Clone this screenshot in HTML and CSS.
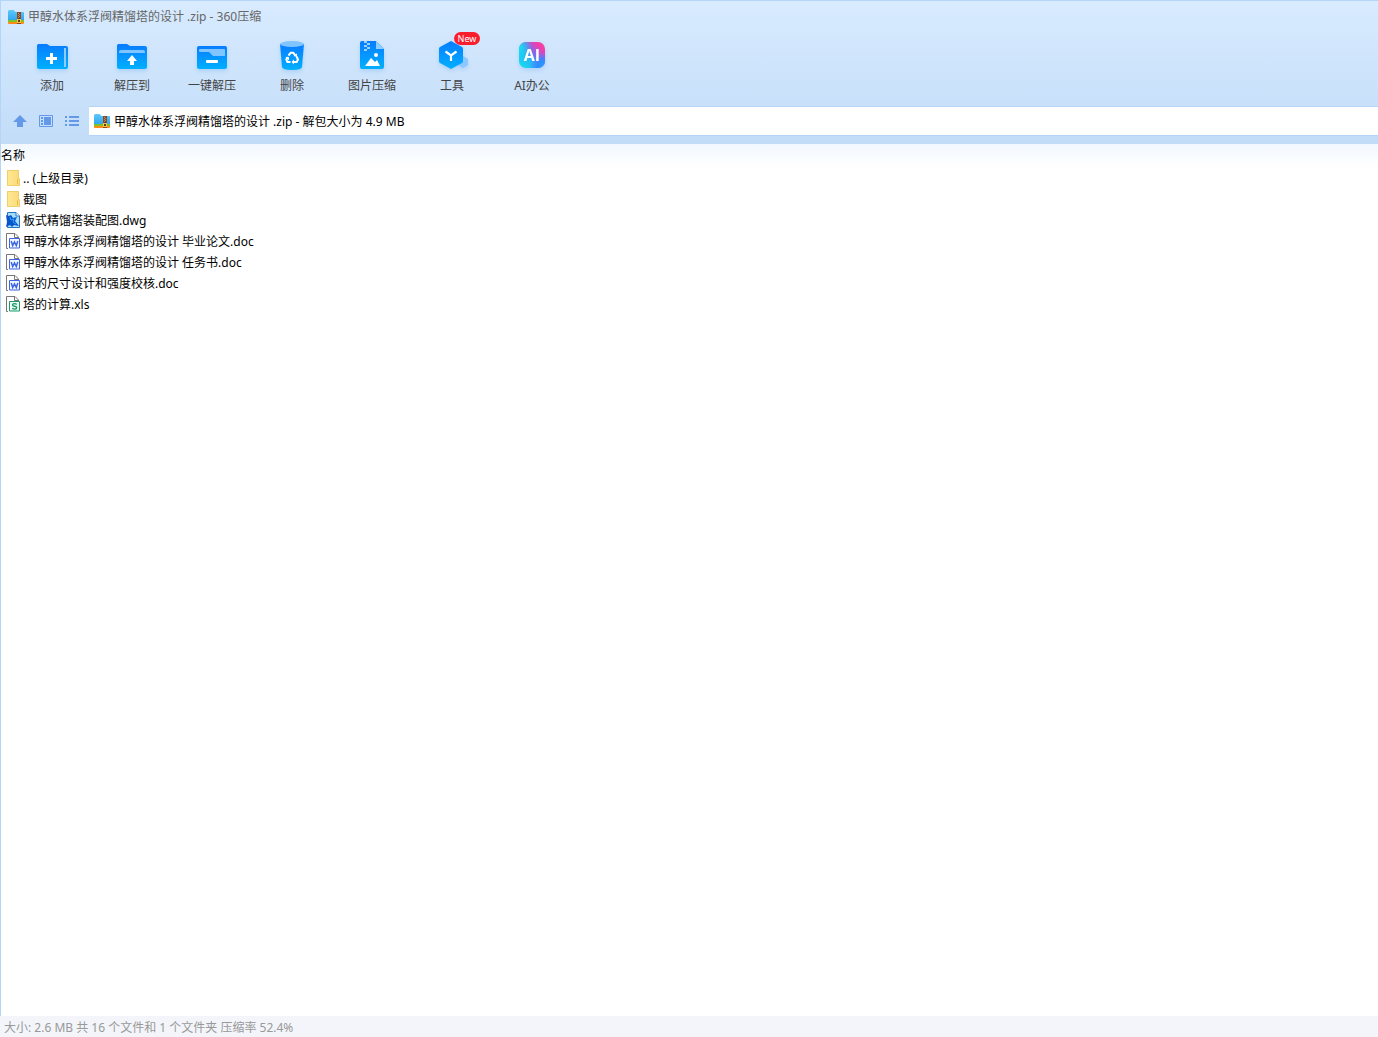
FILE: index.html
```html
<!DOCTYPE html>
<html lang="zh-CN">
<head>
<meta charset="utf-8">
<title>甲醇水体系浮阀精馏塔的设计 .zip - 360压缩</title>
<link rel="stylesheet" href="styles.css">
</head>
<body>
<svg class="defs" width="0" height="0" aria-hidden="true">
  <defs>
    <linearGradient id="blue" x1="0" y1="0" x2="0" y2="1"><stop offset="0" stop-color="#087cff"/><stop offset="1" stop-color="#00b0ff"/></linearGradient>
    <linearGradient id="sky" x1="0" y1="0" x2="0" y2="1"><stop offset="0" stop-color="#5cc8fb"/><stop offset="1" stop-color="#2fa4ee"/></linearGradient>
    <linearGradient id="ai" x1="0" y1="1" x2="1" y2="0"><stop offset="0" stop-color="#12e3f0"/><stop offset=".36" stop-color="#25b9f5"/><stop offset=".56" stop-color="#7b6bf0"/><stop offset=".8" stop-color="#f03fae"/><stop offset="1" stop-color="#f8449c"/></linearGradient>
    <radialGradient id="ai-corner" cx="1" cy="1" r=".6"><stop offset="0" stop-color="#28a0ff"/><stop offset=".5" stop-color="#2f8cff"/><stop offset="1" stop-color="#5c7cff" stop-opacity="0"/></radialGradient>
    <radialGradient id="ai-edge" cx="0" cy=".2" r=".5"><stop offset="0" stop-color="#12e3f0"/><stop offset="1" stop-color="#12e3f0" stop-opacity="0"/></radialGradient>
    <linearGradient id="paper" x1="0" y1="0" x2="1" y2="0"><stop offset="0" stop-color="#ffe894"/><stop offset="1" stop-color="#fbda77"/></linearGradient>
  </defs>
  <symbol id="zip" viewBox="0 0 16 16">
    <path d="M0 2.500q0-1.500 1.500-1.500h4l2 2H15q1 0 1 1v8H0z" fill="url(#sky)"/>
    <path d="M0 11h16v2H0z" fill="#7cc427"/><path d="M0 13h16v1q0 1-1 1H1q-1 0-1-1z" fill="#ff8a16"/>
    <path d="M9 3h4v12H9z" fill="#8a4a28"/><path d="M10 4h1v1h-1zM11 5h1v1h-1zM10 6h1v1h-1zM11 7h1v1h-1zM10 8h1v1h-1z" fill="#c98a50"/><path d="M9 10h4v4H9z" fill="#ffc341"/><path d="M10 9h2v1h-2zM10 11h2v2h-2z" fill="#6d3518"/>
  </symbol>
  <symbol id="folder" viewBox="0 0 14 16">
    <path d="M1 0h12v8l1 1v7H1z" fill="url(#paper)"/><path d="M1.500.5h11V8l1 1v6.500h-12z" fill="none" stroke="#efcf6c"/><path d="M11.500 14V9.500l1-1" fill="none" stroke="#e5bd52"/>
  </symbol>
  <symbol id="page" viewBox="0 0 14 16">
    <path d="M.5.5H9L12.500 4v11.500H.5z" fill="#fff" stroke="#777"/><path d="M8.500.5V4.500h4" fill="none" stroke="#777"/>
  </symbol>
  <symbol id="doc" viewBox="0 0 14 16">
    <use href="#page"/><path d="M2 5h12v11H2z" fill="#fff"/><path d="M3.500 5.500h10v9.500h-10z" fill="#f1f5ff" stroke="#3e66e3"/><path d="M5.200 8l1.500 4.500L8.500 9l1.800 3.500L11.800 8" fill="none" stroke="#3e66e3" stroke-width="1.500"/>
  </symbol>
  <symbol id="xls" viewBox="0 0 14 16">
    <use href="#page"/><path d="M2 5h12v11H2z" fill="#fff"/><path d="M3.500 5.500h10v9.500h-10z" fill="#eefaf5" stroke="#199a66"/><path d="M10.800 8.300C9 7.200 6.500 7.500 6.500 9c0 1.800 4.200.8 4.200 2.700 0 1.600-2.700 1.800-4.500.7" fill="none" stroke="#199a66" stroke-width="1.400"/>
  </symbol>
  <symbol id="dwg" viewBox="0 0 14 16">
    <path d="M1.500.5H10L13.500 4v11.500h-12z" fill="#a5dcfa" stroke="#2873c0"/><path d="M10 .5V4h3.500" fill="#fff" stroke="#2873c0"/>
    <path d="M0 3l3 1 2-1 2 3 4-1-2 4 4 5-5-1-2 2-2-2-4 2 1-5z" fill="#0754cb"/><path d="M4 5l1 3 3-1-1 3 3 2" fill="none" stroke="#32a5ff"/>
  </symbol>
</svg>

<div class="window">
  <header class="chrome">
    <div class="titlebar"><svg class="icon-zip"><use href="#zip"/></svg><h1 class="title">甲醇水体系浮阀精馏塔的设计 .zip - 360压缩</h1></div>

    <nav class="toolbar" aria-label="工具栏">
      <button class="tool" type="button">
        <svg class="tool-icon" viewBox="0 -1 34 34"><path d="M2 5.500Q2 4 3.500 4H12l3 2h16q2 0 2 2v19q0 2-2 2H4q-2 0-2-2z" fill="url(#blue)"/><path d="M30 8v19" stroke="#8fccff" stroke-width="2"/><path d="M11 18.500h11M16.500 13v11" stroke="#fff" stroke-width="3"/></svg>
        <span>添加</span>
      </button>
      <button class="tool" type="button">
        <svg class="tool-icon" viewBox="0 -1 34 34"><path d="M2 5.500Q2 4 3.500 4H12l3 2h15q2 0 2 2v19q0 2-2 2H4q-2 0-2-2z" fill="url(#blue)"/><path d="M4 13v-1q0-2 2-2h22q2 0 2 2v1z" fill="#80c5ff"/><path d="M17 15l5 6h-3v4h-4v-4h-3z" fill="#fff"/></svg>
        <span>解压到</span>
      </button>
      <button class="tool" type="button">
        <svg class="tool-icon" viewBox="0 -1 34 34"><rect x="2" y="6" width="30" height="23" rx="2" fill="url(#blue)"/><path d="M4 10q0-1 1-1h24q1 0 1 1v6H18l-4-4H5q-1 0-1-1z" fill="#80c5ff"/><rect x="11" y="20" width="12" height="3" rx="1" fill="#fff"/></svg>
        <span>一键解压</span>
      </button>
      <button class="tool" type="button">
        <svg class="tool-icon" viewBox="0 -1 34 34"><path d="M5 4l2 23q.3 3 10 3t10-3l2-23z" fill="url(#blue)"/><ellipse cx="17" cy="4" rx="12" ry="3" fill="#80c5ff"/><g fill="none" stroke="#fff" stroke-width="2"><path d="M13.500 15.500l2.200-2.700h2.600l2 2.500"/><path d="M21.500 16.500l1.500 3-1.300 2.500h-3.500"/><path d="M15.500 22h-3L11.300 19.500l1.500-2.500"/></g><path d="M18.500 16l3.500 1v-3.500zM19 19.500v5L16.500 22zM10.500 17H14v3.500z" fill="#fff"/></svg>
        <span>删除</span>
      </button>
      <button class="tool" type="button">
        <svg class="tool-icon" viewBox="0 0 34 34"><path d="M5 4q0-2 2-2h14l8 8v18q0 2-2 2H7q-2 0-2-2z" fill="url(#blue)"/><path d="M21 2l8 8h-8z" fill="#91cdff"/><path d="M9 2h3v2H9zM12 4h3v2h-3zM9 6h3v2H9zM12 8h3v2h-3zM9 10h3v2H9z" fill="#9bd2ff"/><circle cx="21" cy="16" r="2" fill="#fff"/><path d="M10 27l6-8 4 4 2-2 3 6z" fill="#fff"/></svg>
        <span>图片压缩</span>
      </button>
      <button class="tool" type="button">
        <svg class="tool-icon" viewBox="0 0 34 34"><path d="M28 17l5 3v6l-5 3-5-3v-6z" fill="#8dc7ff"/><path d="M16 2l11 6q1 .6 1 2v12q0 1.400-1 2l-11 6L5 24q-1-.6-1-2V10q0-1.400 1-2z" fill="url(#blue)"/><path d="M10.500 12.500l5.500 4 5.500-4M16 16v6" fill="none" stroke="#fff" stroke-width="2.200"/></svg>
        <span>工具</span><span class="badge">New</span>
      </button>
      <button class="tool" type="button">
        <span class="tool-icon ai"><svg class="ai-tile" viewBox="0 0 26 26"><rect width="26" height="26" rx="7" fill="url(#ai)"/><rect width="26" height="26" rx="7" fill="url(#ai-edge)"/><rect width="26" height="26" rx="7" fill="url(#ai-corner)"/></svg><b class="ai-text">AI</b></span>
        <span>AI办公</span>
      </button>
    </nav>

    <div class="address-row">
      <button class="nav-button" type="button" aria-label="上级目录"><svg viewBox="0 0 16 16"><path d="M8 2l7 7h-4v5H5V9H1z" fill="#6499ea"/></svg></button>
      <button class="nav-button" type="button" aria-label="视图"><svg viewBox="0 0 16 16"><path d="M1.500 2.500h13v11h-13z" fill="none" stroke="#6499ea"/><path d="M3 4h2v2H3zM3 7h2v2H3zM3 10h2v2H3zM6 4h7v8H6z" fill="#6499ea"/></svg></button>
      <button class="nav-button" type="button" aria-label="列表"><svg viewBox="0 0 16 16"><path d="M1 3h2v2H1zM5 3h10v2H5zM1 7h2v2H1zM5 7h10v2H5zM1 11h2v2H1zM5 11h10v2H5z" fill="#6499ea"/></svg></button>
      <div class="address"><svg class="icon-zip"><use href="#zip"/></svg><input class="address-input" type="text" aria-label="路径" value="甲醇水体系浮阀精馏塔的设计 .zip - 解包大小为 4.9 MB"></div>
    </div>
  </header>

  <main class="content">
    <table class="files">
      <thead><tr><th scope="col">名称</th></tr></thead>
      <tbody>
        <tr><td><div class="file"><svg class="file-icon"><use href="#folder"/></svg><span>.. (上级目录)</span></div></td></tr>
        <tr><td><div class="file"><svg class="file-icon"><use href="#folder"/></svg><span>截图</span></div></td></tr>
        <tr><td><div class="file"><svg class="file-icon"><use href="#dwg"/></svg><span>板式精馏塔装配图.dwg</span></div></td></tr>
        <tr><td><div class="file"><svg class="file-icon"><use href="#doc"/></svg><span>甲醇水体系浮阀精馏塔的设计 毕业论文.doc</span></div></td></tr>
        <tr><td><div class="file"><svg class="file-icon"><use href="#doc"/></svg><span>甲醇水体系浮阀精馏塔的设计 任务书.doc</span></div></td></tr>
        <tr><td><div class="file"><svg class="file-icon"><use href="#doc"/></svg><span>塔的尺寸设计和强度校核.doc</span></div></td></tr>
        <tr><td><div class="file"><svg class="file-icon"><use href="#xls"/></svg><span>塔的计算.xls</span></div></td></tr>
      </tbody>
    </table>
  </main>

  <footer class="status">大小: 2.6 MB 共 16 个文件和 1 个文件夹 压缩率 52.4%</footer>
</div>
</body>
</html>
```
FILE: styles.css
```css
* { box-sizing: border-box; }

body {
  margin: 0;
  color: #000;
  font: 12px/16px "Noto Sans", "Noto Sans CJK SC", sans-serif;
}

button, input { font: inherit; }
button { border: 0; padding: 0; background: none; color: inherit; }
.defs { position: absolute; }

.window { display: flex; flex-direction: column; min-height: 100vh; }

.chrome {
  border-top: 1px solid #b5d5f7;
  border-left: 1px solid #b5d5f7;
  padding-bottom: 8px;
  background: linear-gradient(#d8ebff, #c2dcf8);
}

.titlebar {
  display: flex;
  align-items: center;
  gap: 4px;
  height: 32px;
  padding-left: 7px;
}
.title { margin: 0; color: #666; font-size: 12px; font-weight: 400; }
.icon-zip { flex: none; width: 16px; height: 16px; }

.toolbar { display: flex; height: 73px; padding-left: 11px; }
.tool {
  position: relative;
  display: flex;
  flex-direction: column;
  align-items: center;
  gap: 5px;
  width: 80px;
  padding-top: 6px;
  color: #444;
}
.tool-icon { width: 34px; height: 34px; filter: drop-shadow(0 2px 2px #78b4f066); }
.badge {
  position: absolute;
  top: -1px;
  left: 42px;
  width: 26px;
  border-radius: 7px;
  background: #fa1e2d;
  color: #fff;
  font-size: 9px;
  line-height: 13px;
}
.ai { display: grid; place-items: center; padding-bottom: 2px; }
.ai-tile, .ai-text { grid-area: 1 / 1; }
.ai-tile { width: 26px; height: 26px; }
.ai-text { z-index: 1; color: #fff; font: 700 16px/26px "Open Sans", sans-serif; }

.address-row { display: flex; align-items: center; padding-left: 11px; gap: 10px; }
.nav-button { display: flex; width: 16px; height: 16px; }
.nav-button svg { width: 16px; height: 16px; }
.address {
  display: flex;
  flex: 1;
  align-items: center;
  gap: 4px;
  height: 30px;
  padding-left: 5px;
  border: solid #b5d5f7;
  border-width: 1px 0;
  background: #fff;
  margin-left: -1px;
}
.address-input { flex: 1; min-width: 0; height: 20px; border: 0; padding: 0; outline: 0; background: none; color: #000; }

.content {
  flex: 1;
  border-left: 1px solid #b5d5f7;
  background: #fff linear-gradient(#f2f8ff, #fff) 0 0 / 100% 24px no-repeat;
}
.files { width: 100%; border-collapse: collapse; }
.files th { height: 24px; padding: 0; font-weight: 400; text-align: left; }
.files td { height: 21px; padding: 2px 0 0 5px; vertical-align: top; }
.file { display: flex; align-items: flex-start; gap: 3px; line-height: 18px; }
.file-icon { flex: none; width: 14px; height: 16px; }

.status { padding: 4px 4px 1px; background: #f3f5fa; color: #999; }
```
